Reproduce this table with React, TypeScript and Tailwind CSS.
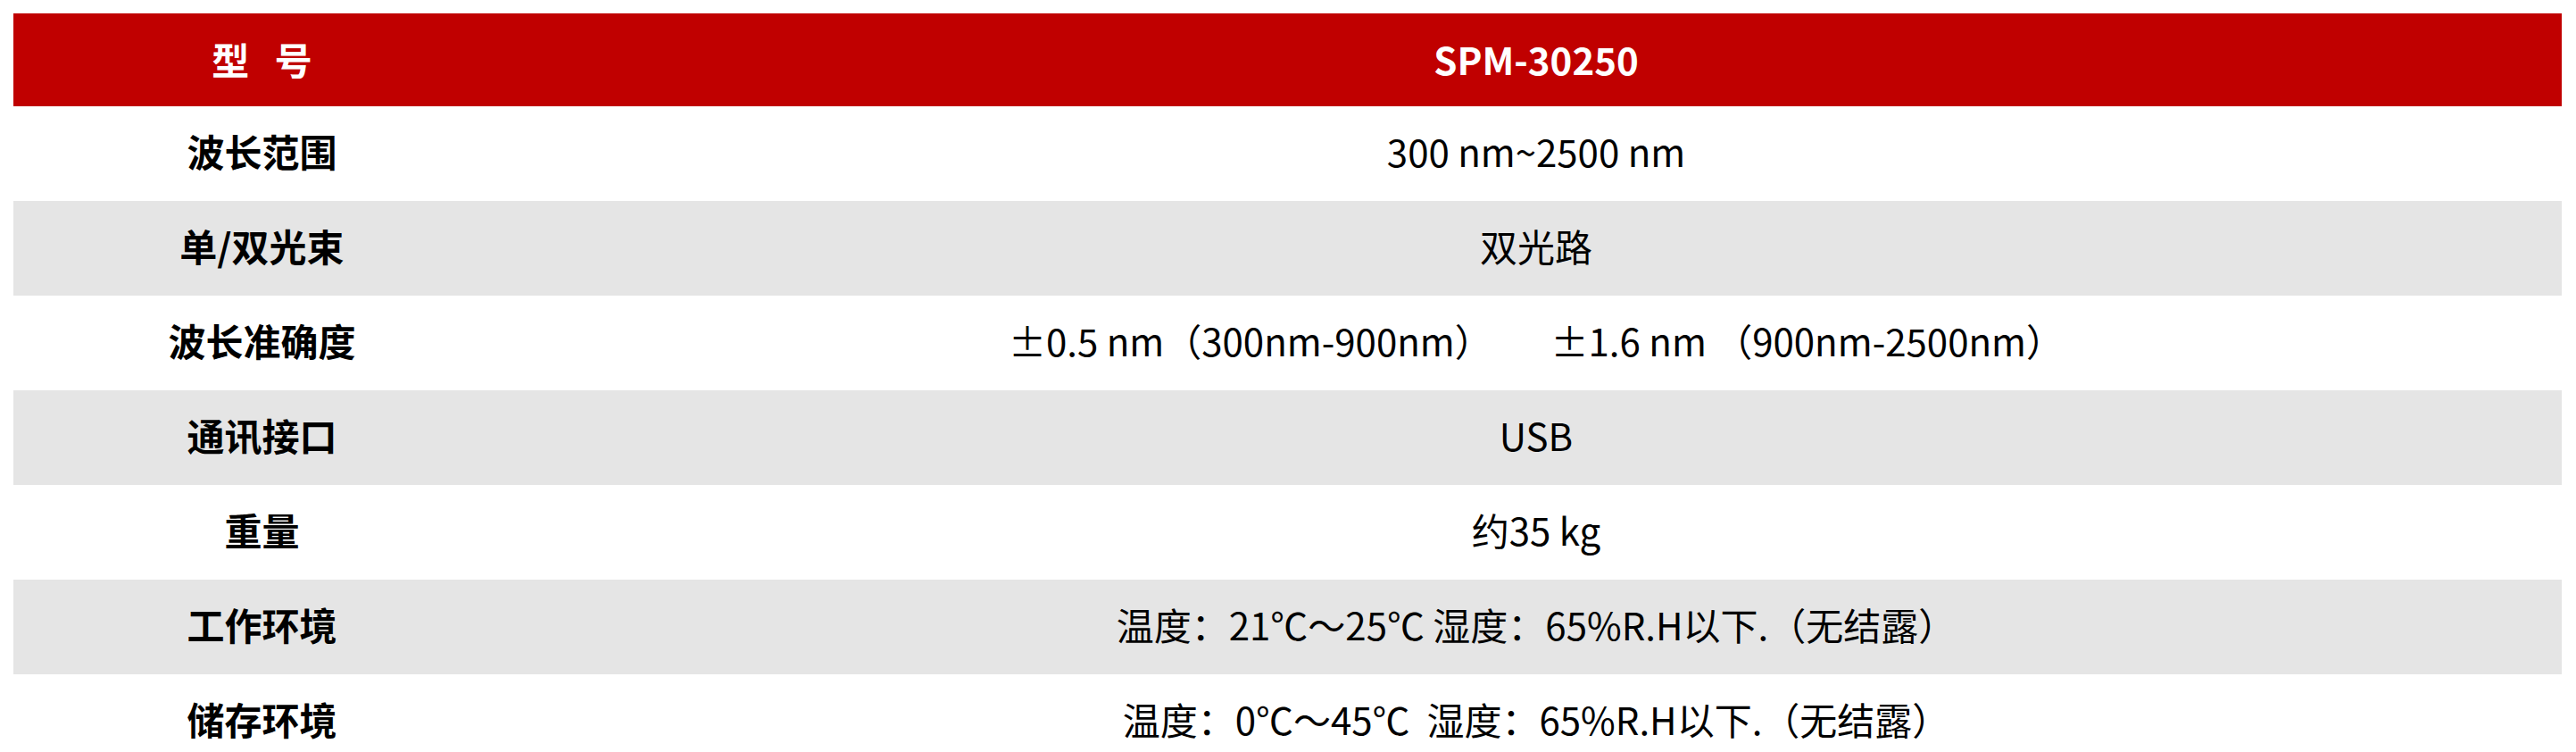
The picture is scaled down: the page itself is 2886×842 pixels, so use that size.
import React from "react";

interface SpecRow {
  label: string;
  value: string;
}

const rows: SpecRow[] = [
  { label: "波长范围", value: "300 nm~2500 nm" },
  { label: "单/双光束", value: "双光路" },
  {
    label: "波长准确度",
    value: "±0.5 nm（300nm-900nm）       ±1.6 nm （900nm-2500nm）",
  },
  { label: "通讯接口", value: "USB" },
  { label: "重量", value: "约35 kg" },
  { label: "工作环境", value: "温度：21℃～25℃ 湿度：65%R.H以下.（无结露）" },
  { label: "储存环境", value: "温度：0℃～45℃  湿度：65%R.H以下.（无结露）" },
];

const App = () => {
  return (
    <div
      className="min-h-screen bg-white pt-[15px] pl-[15px] text-black"
      style={{ fontFamily: '"Noto Sans CJK SC", "Noto Sans", sans-serif' }}
    >
      <div className="w-[2855px]">
        <div className="grid h-[104px] grid-cols-[557px_1fr] items-center bg-[#c00000] pb-[4px] text-[42px] font-bold text-white">
          <div className="text-center whitespace-pre">型   号</div>
          <div className="text-center">SPM-30250</div>
        </div>
        {rows.map((row, i) => (
          <div
            key={row.label}
            className={
              "grid h-[106px] grid-cols-[557px_1fr] items-center pb-[8px] text-[42px] " +
              (i % 2 === 1 ? "bg-[#e5e5e5]" : "bg-white")
            }
          >
            <div className="text-center font-bold">{row.label}</div>
            <div className="text-center whitespace-pre">{row.value}</div>
          </div>
        ))}
      </div>
    </div>
  );
};

export default App;
